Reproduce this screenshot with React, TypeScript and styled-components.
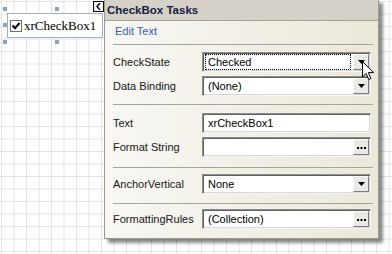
import React from 'react'
import styled, { createGlobalStyle } from 'styled-components'

const GlobalStyle = createGlobalStyle`
  html, body {
    margin: 0;
    padding: 0;
  }
  body {
    width: 392px;
    height: 254px;
    overflow: hidden;
    font-family: "Liberation Sans", Arial, sans-serif;
  }
`

// designer surface with its snapping grid
const Surface = styled.div`
  position: relative;
  width: 392px;
  height: 254px;
  overflow: hidden;
  background-color: #fff;
  background-image:
    linear-gradient(to right, #e3e3e3 1px, transparent 1px),
    linear-gradient(to bottom, #e3e3e3 1px, transparent 1px);
  background-size: 12.5px 12.5px;
  background-position: 1px 1px;
`

const Selection = styled.div`
  position: absolute;
  left: 5px;
  top: 9px;
  width: 104px;
  height: 33px;
`

const Handle = styled.span<{ $x: string; $y: string }>`
  position: absolute;
  left: ${({ $x }) => $x};
  top: ${({ $y }) => $y};
  width: 4px;
  height: 4px;
  margin: -2px 0 0 -2px;
  background: #8aa4c8;
`

const ControlFrame = styled.div`
  position: absolute;
  left: 7px;
  top: 13px;
  width: 92px;
  height: 23px;
  border: 1px solid #9fb0c8;
  display: flex;
  align-items: center;
  gap: 2px;
  padding-left: 2px;
  background: #fff;
`

const CheckLabel = styled.span`
  font-family: "Liberation Serif", "Times New Roman", serif;
  font-size: 13px;
  color: #000;
`

const SmartTagGlyph = styled.div`
  position: absolute;
  left: 93px;
  top: 1px;
  width: 9px;
  height: 9px;
  border: 1px solid #000;
  background: #f4f4f4;
  display: flex;
  align-items: center;
  justify-content: center;
  z-index: 2;
`

const Panel = styled.div`
  position: absolute;
  left: 104px;
  top: -1px;
  width: 273px;
  height: 238px;
  border: 1px solid #9d998b;
  background: linear-gradient(to right, #f8f7f3, #ebe8d9);
  box-shadow: 4px 4px 3px rgba(0, 0, 0, 0.45);
  display: flex;
  flex-direction: column;
`

const TitleBar = styled.div`
  height: 20px;
  background: #d5d1c9;
  border-bottom: 1px solid #a6a293;
  display: flex;
  align-items: center;
  padding-left: 2px;
  font-weight: bold;
  font-size: 11.5px;
  color: #14213d;
`

const Body = styled.div`
  padding: 0 6px 0 7px;
  display: flex;
  flex-direction: column;
`

const Section = styled.div<{ $top?: number; $bottom?: number }>`
  display: grid;
  grid-template-columns: 89px 169px;
  row-gap: 4px;
  align-items: center;
  padding: ${({ $top = 7 }) => $top}px 0 ${({ $bottom = 8 }) => $bottom}px 1px;
`

const Separator = styled.div`
  height: 1px;
  background: #a4a4a2;
  margin: 0 0 0 1px;
  width: 260px;
`

const EditLink = styled.div`
  padding: 4px 0 6px 3px;
  font-size: 11px;
  color: #2f5fb3;
  line-height: 13px;
`

const Label = styled.div`
  font-size: 11px;
  color: #161616;
`

const Field = styled.div`
  height: 20px;
  box-sizing: border-box;
  border: 1px solid;
  border-color: #8f8f8f #f4f4f4 #f4f4f4 #8f8f8f;
  box-shadow: inset 1px 1px 0 #5f5f5f, inset -1px -1px 0 #d8d8d8;
  background: #fff;
  display: flex;
  align-items: center;
  padding: 2px;
  gap: 2px;
`

const FieldText = styled.div<{ $focused?: boolean }>`
  flex: 1;
  height: 14px;
  display: flex;
  align-items: center;
  padding-left: 2px;
  font-size: 11px;
  color: #000;
  border: 1px ${({ $focused }) => ($focused ? 'dotted #000' : 'solid transparent')};
`

const FieldButton = styled.div`
  width: 16px;
  height: 16px;
  margin-right: -1px;
  box-sizing: border-box;
  background: #e9e9e6;
  border: 1px solid;
  border-color: #ffffff #7d7d7d #7d7d7d #ffffff;
  display: flex;
  align-items: center;
  justify-content: center;
`

const Cursor = styled.svg`
  position: absolute;
  left: 362px;
  top: 61px;
  z-index: 3;
`

const Arrow = () => (
  <svg width="7" height="4" viewBox="0 0 7 4">
    <path d="M0 0h7L3.5 4z" fill="#000" />
  </svg>
)

const Dots = () => (
  <svg width="9" height="3" viewBox="0 0 9 3">
    <rect x="0" y="1" width="2" height="2" fill="#000" />
    <rect x="3.5" y="1" width="2" height="2" fill="#000" />
    <rect x="7" y="1" width="2" height="2" fill="#000" />
  </svg>
)

type FieldKind = 'combo' | 'text' | 'ellipsis'

const PropField = ({ value, kind, focused }: { value: string; kind: FieldKind; focused?: boolean }) => (
  <Field>
    <FieldText $focused={focused}>{value}</FieldText>
    {kind === 'combo' && (
      <FieldButton>
        <Arrow />
      </FieldButton>
    )}
    {kind === 'ellipsis' && (
      <FieldButton>
        <Dots />
      </FieldButton>
    )}
  </Field>
)

const Row = ({ label, value, kind, focused }: { label: string; value: string; kind: FieldKind; focused?: boolean }) => (
  <>
    <Label>{label}</Label>
    <PropField value={value} kind={kind} focused={focused} />
  </>
)

const handles = [
  ['0px', '0px'],
  ['52px', '0px'],
  ['104px', '0px'],
  ['0px', '16px'],
  ['0px', '33px'],
  ['52px', '33px'],
]

export default function App() {
  return (
    <Surface>
      <GlobalStyle />
      <Selection>
        {handles.map(([x, y]) => (
          <Handle key={x + y} $x={x} $y={y} />
        ))}
      </Selection>
      <ControlFrame>
        <svg width="12" height="12" viewBox="0 0 12 12">
          <rect x="0.5" y="0.5" width="11" height="11" fill="#fff" stroke="#6b6b6b" />
          <path d="M2.5 5.5l2.5 2.7 4.6-5.2" fill="none" stroke="#000" strokeWidth="2" />
        </svg>
        <CheckLabel>xrCheckBox1</CheckLabel>
      </ControlFrame>
      <SmartTagGlyph>
        <svg width="5" height="7" viewBox="0 0 5 7">
          <path d="M4 0L1 3.5 4 7" fill="none" stroke="#000" strokeWidth="1.4" />
        </svg>
      </SmartTagGlyph>

      <Panel>
        <TitleBar>CheckBox Tasks</TitleBar>
        <Body>
          <EditLink>Edit Text</EditLink>
          <Separator />
          <Section>
            <Row label="CheckState" value="Checked" kind="combo" focused />
            <Row label="Data Binding" value="(None)" kind="combo" />
          </Section>
          <Separator />
          <Section $top={8} $bottom={10}>
            <Row label="Text" value="xrCheckBox1" kind="text" />
            <Row label="Format String" value="" kind="ellipsis" />
          </Section>
          <Separator />
          <Section $top={6} $bottom={9}>
            <Row label="AnchorVertical" value="None" kind="combo" />
          </Section>
          <Separator />
          <Section $top={5}>
            <Row label="FormattingRules" value="(Collection)" kind="ellipsis" />
          </Section>
        </Body>
      </Panel>

      <Cursor width="12" height="19" viewBox="0 0 12 19">
        <path
          d="M0.5 0.5v15.5l3.6-3.5 2.6 6 2.2-1-2.6-5.9h5.2z"
          fill="#fff"
          stroke="#000"
          strokeWidth="1"
        />
      </Cursor>
    </Surface>
  )
}
